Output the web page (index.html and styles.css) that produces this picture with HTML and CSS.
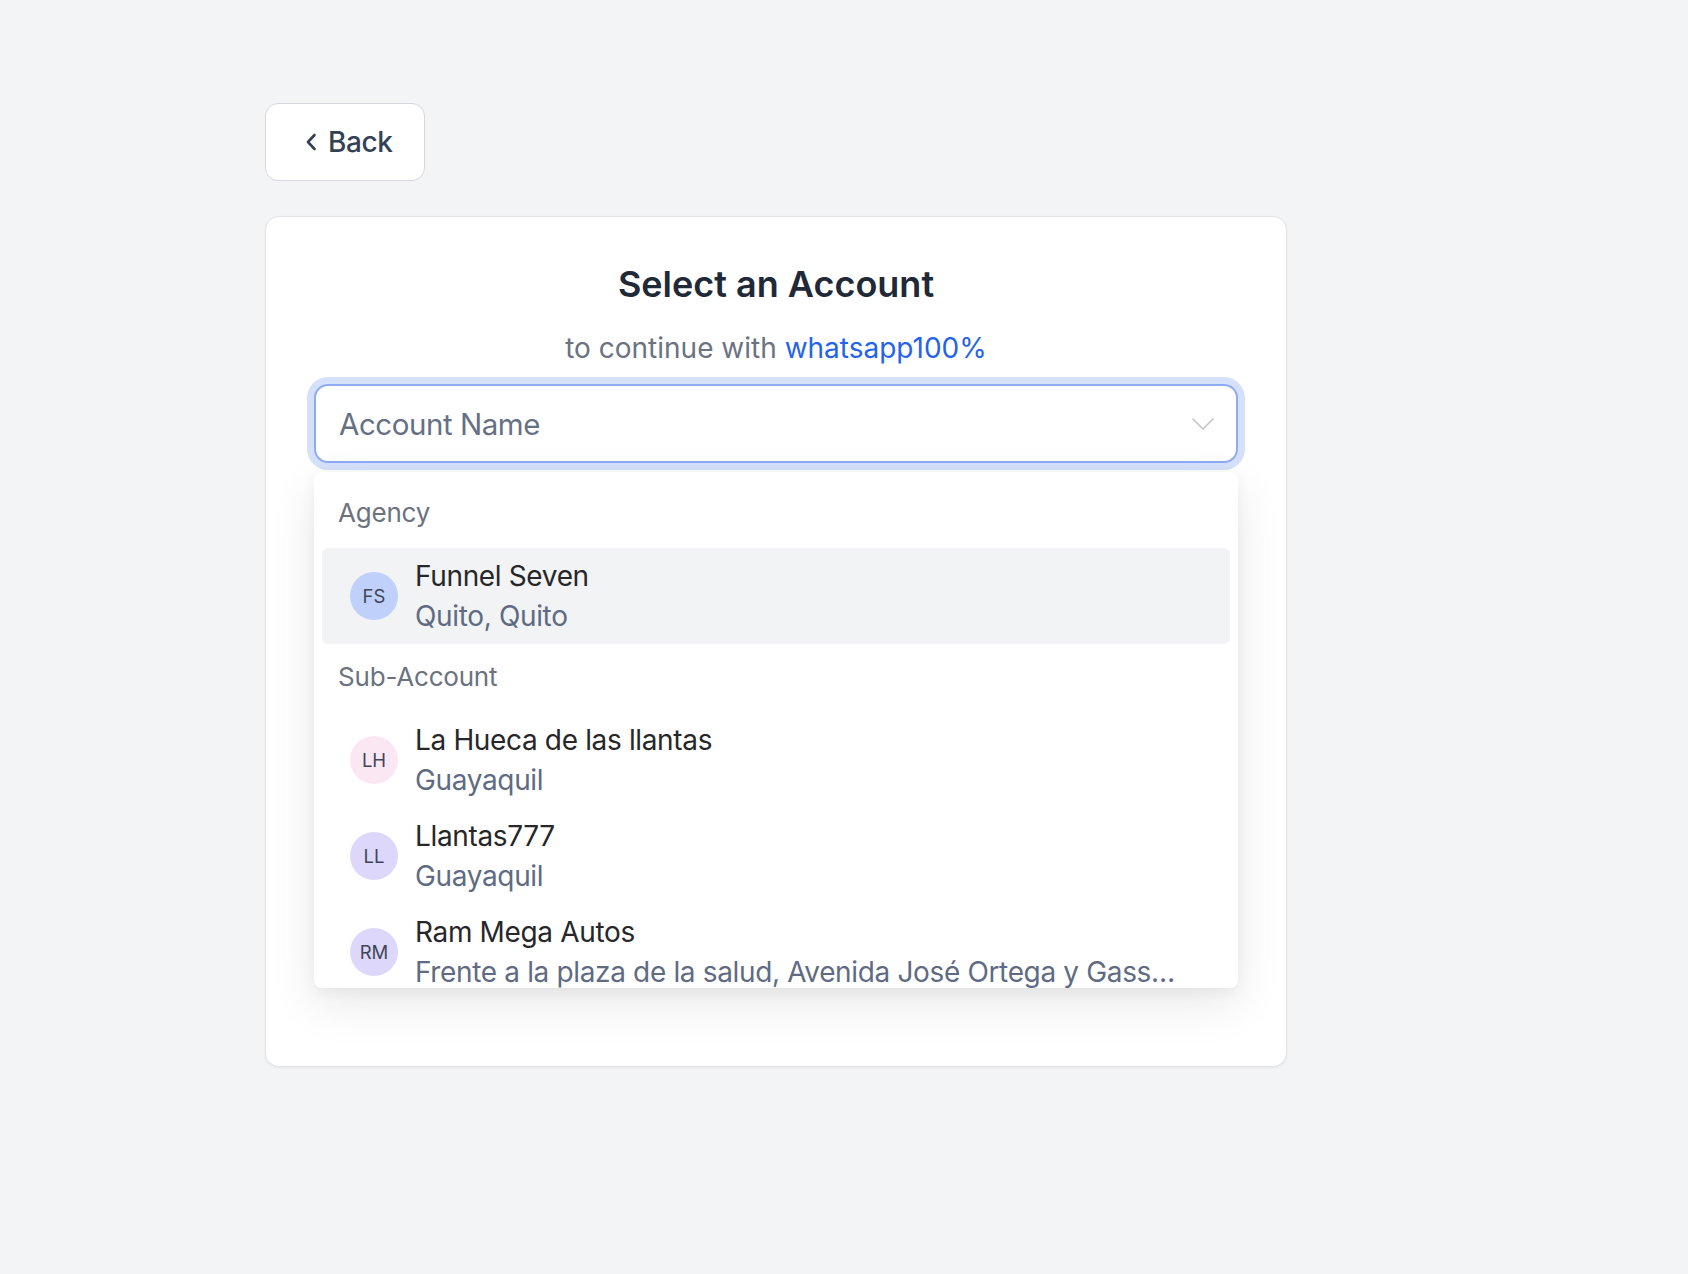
FILE: index.html
```html
<!DOCTYPE html>
<html lang="en">
<head>
<meta charset="utf-8">
<title>Select an Account</title>
<link rel="stylesheet" href="styles.css">
</head>
<body>
<div class="page">
  <button class="back" type="button">
    <svg class="back-icon" width="12" height="18" viewBox="0 0 12 18" fill="none"><path d="M9.5 2 L3 9 L9.5 16" stroke="#334155" stroke-width="2.6" stroke-linecap="round" stroke-linejoin="round"/></svg>
    <span>Back</span>
  </button>
  <div class="card">
    <h1 class="title">Select an Account</h1>
    <p class="subtitle">to continue with <span class="app">whatsapp100%</span></p>
    <div class="select-wrap">
      <div class="select">
        <span class="placeholder">Account Name</span>
        <svg class="caret" width="22" height="12" viewBox="0 0 22 12" fill="none"><path d="M1 1 L11 11 L21 1" stroke="#c4c4c6" stroke-width="1.6" stroke-linecap="round" stroke-linejoin="round"/></svg>
      </div>
      <div class="menu">
        <div class="group-label">Agency</div>
        <div class="option active">
          <div class="avatar av-blue">FS</div>
          <div class="option-text">
            <div class="option-name">Funnel Seven</div>
            <div class="option-sub">Quito, Quito</div>
          </div>
        </div>
        <div class="group-label">Sub-Account</div>
        <div class="option">
          <div class="avatar av-pink">LH</div>
          <div class="option-text">
            <div class="option-name">La Hueca de las llantas</div>
            <div class="option-sub">Guayaquil</div>
          </div>
        </div>
        <div class="option">
          <div class="avatar av-purple">LL</div>
          <div class="option-text">
            <div class="option-name">Llantas777</div>
            <div class="option-sub">Guayaquil</div>
          </div>
        </div>
        <div class="option">
          <div class="avatar av-purple">RM</div>
          <div class="option-text">
            <div class="option-name">Ram Mega Autos</div>
            <div class="option-sub">Frente a la plaza de la salud, Avenida José Ortega y Gasset y Avenida de las Américas</div>
          </div>
        </div>
      </div>
    </div>
  </div>
</div>
</body>
</html>
```

FILE: styles.css
```css
* { box-sizing: border-box; }

html, body {
  margin: 0;
  padding: 0;
  background: #f3f4f6;
  font-family: Inter, "Noto Sans", "Liberation Sans", sans-serif;
}

.page {
  padding: 103px 0 0 265px;
  display: flex;
  flex-direction: column;
  align-items: flex-start;
  gap: 35px;
  min-height: 1274px;
}

.back {
  height: 78px;
  padding: 0 31px 0 39px;
  display: flex;
  align-items: center;
  gap: 11px;
  background: #ffffff;
  border: 1px solid #d4d7dd;
  border-radius: 13px;
  font-family: inherit;
  font-size: 28px;
  font-weight: 500;
  letter-spacing: -0.4px;
  color: #334155;
  cursor: pointer;
}

.back-icon { display: block; flex: none; }

.card {
  width: 1022px;
  min-height: 851px;
  background: #ffffff;
  border: 1px solid #e3e5e9;
  border-radius: 14px;
  box-shadow: 0 1px 3px rgba(0, 0, 0, 0.06);
  padding: 44px 48px 40px;
}

.title {
  margin: 0;
  text-align: center;
  font-size: 36px;
  line-height: 46px;
  font-weight: 600;
  color: #1f2937;
}

.subtitle {
  margin: 21px 0 0;
  text-align: center;
  font-size: 28px;
  line-height: 40px;
  color: #6b7280;
}

.app { color: #2563eb; }

.select-wrap {
  position: relative;
  margin-top: 16px;
}

.select {
  height: 79px;
  border: 2px solid #8eabf6;
  border-radius: 14px;
  box-shadow: 0 0 0 7px #d5e0fb;
  background: #ffffff;
  display: flex;
  align-items: center;
  justify-content: space-between;
  padding: 0 22px 0 23px;
}

.placeholder {
  font-size: 29.5px;
  letter-spacing: -0.45px;
  color: #667085;
}

.caret { display: block; flex: none; }

.menu {
  position: absolute;
  top: calc(100% + 9px);
  left: 0;
  right: 0;
  height: 516px;
  overflow: hidden;
  background: #ffffff;
  border-radius: 8px;
  padding: 8px;
  box-shadow: 0 16px 48px rgba(0, 0, 0, 0.09), 0 4px 14px rgba(0, 0, 0, 0.05);
  z-index: 2;
}

.group-label {
  padding: 15px 16px 17px;
  font-size: 26px;
  line-height: 36px;
  letter-spacing: -0.2px;
  color: #6b7280;
}

.option {
  display: flex;
  align-items: center;
  gap: 17px;
  padding: 8px 51px 8px 28px;
  border-radius: 6px;
}

.option.active { background: #f2f3f5; }

.avatar {
  width: 48px;
  height: 48px;
  border-radius: 50%;
  flex: none;
  display: flex;
  align-items: center;
  justify-content: center;
  font-size: 18.5px;
  color: #3f4656;
}

.av-blue { background: #bfd0fb; }
.av-pink { background: #fbe7f3; }
.av-purple { background: #ddd8fb; }

.option-text {
  min-width: 0;
  flex: 1;
}

.option-name {
  font-size: 28px;
  line-height: 40px;
  letter-spacing: -0.35px;
  color: #27272a;
  white-space: nowrap;
  overflow: hidden;
  text-overflow: ellipsis;
}

.option-sub {
  font-size: 28px;
  line-height: 40px;
  letter-spacing: -0.35px;
  color: #5f6b82;
  white-space: nowrap;
  overflow: hidden;
  text-overflow: ellipsis;
}
```
